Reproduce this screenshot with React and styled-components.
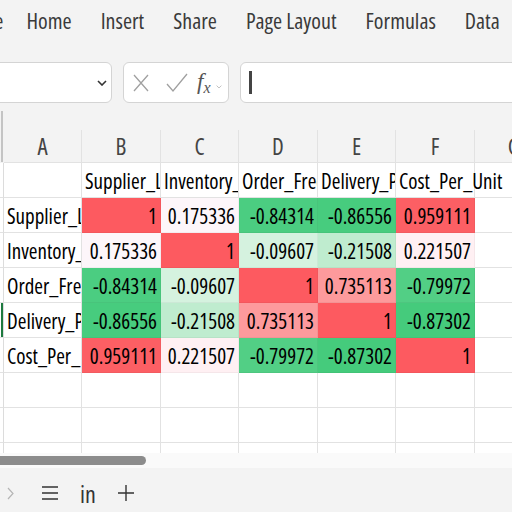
import React from 'react';
import styled, { createGlobalStyle } from 'styled-components';

const GlobalStyle = createGlobalStyle`
  html, body { margin: 0; padding: 0; }
  body {
    width: 512px;
    height: 512px;
    overflow: hidden;
    background: #f3f3f3;
    font-family: "Open Sans", "Liberation Sans", sans-serif;
    font-stretch: 75%;
  }
`;

const Page = styled.div`
  width: 512px;
  height: 512px;
  display: flex;
  flex-direction: column;
  overflow: hidden;
`;

const TabBar = styled.div`
  height: 40px;
  display: flex;
  align-items: center;
  gap: 29px;
  margin-left: -23px;
  white-space: nowrap;
`;

const Tab = styled.span`
  font-size: 22px;
  color: #3a3a3a;
  margin-right: ${(p) => (p.$first ? '-6px' : '0')};
`;

const FormulaRow = styled.div`
  display: flex;
  gap: 11px;
  padding: 22px 0 1px;
  height: 41px;
`;

const Box = styled.div`
  height: 41px;
  box-sizing: border-box;
  background: #fff;
  border: 1px solid #d4d4d4;
  border-radius: 6px;
  display: flex;
  align-items: center;
`;

const NameBox = styled(Box)`
  width: 120px;
  margin-left: -8px;
  justify-content: flex-end;
  padding-right: 4px;
`;

const FuncBox = styled(Box)`
  width: 106px;
  padding-left: 9px;
`;

const FormulaInput = styled(Box)`
  flex: 1;
  margin-right: -20px;
  padding-left: 8px;
`;

const Caret = styled.div`
  width: 3px;
  height: 23px;
  background: #444;
`;

const Fx = styled.span`
  font-family: "Liberation Serif", serif;
  font-style: italic;
  font-size: 23px;
  color: #555;
  margin-left: 8px;
  sub { font-size: 16px; vertical-align: -4px; }
`;

const Sheet = styled.div`
  height: 349px;
  overflow: hidden;
  background: #fff;
`;

const Grid = styled.div`
  display: grid;
  grid-template-columns: 4px 78px 79px 78px 79px 78px 79px 79px;
  grid-template-rows: 59px;
  grid-auto-rows: 35px;
  font-size: 21px;
  color: #000;
`;

const HeaderCell = styled.div`
  background: #f3f3f3;
  display: flex;
  align-items: flex-end;
`;

const Letter = styled.div`
  flex: 1;
  height: 33px;
  box-sizing: border-box;
  border-right: 1px solid #e2e2e2;
  border-bottom: 1px solid #e2e2e2;
  display: flex;
  align-items: center;
  justify-content: center;
  color: #444;
  font-size: 23px;
`;

const Corner = styled.div`
  background: #f3f3f3;
  display: flex;
  align-items: flex-end;
  padding-bottom: 1px;
  box-sizing: border-box;
  &::before {
    content: '';
    display: block;
    width: 2px;
    margin-left: 1px;
    height: 51px;
    background: #c4c4c4;
  }
`;

const RowHead = styled.div`
  box-sizing: border-box;
  border-right: 1px solid #dcdcdc;
  border-bottom: 1px solid #e2e2e2;
  background: ${(p) => (p.$active ? 'linear-gradient(to right, #fff 1px, #1e7a3f 1px)' : '#fff')};
`;

const Cell = styled.div`
  box-sizing: border-box;
  border-right: 1px solid ${(p) => (p.$bg ? 'rgba(0,0,0,0.04)' : '#e2e2e2')};
  border-bottom: 1px solid ${(p) => (p.$bg ? 'rgba(0,0,0,0.04)' : '#e2e2e2')};
  background: ${(p) => p.$bg || '#fff'};
  display: flex;
  align-items: flex-end;
  justify-content: ${(p) => (p.$num ? 'flex-end' : 'flex-start')};
  padding: 0 3px 2px;
  white-space: nowrap;
  overflow: ${(p) => (p.$spill ? 'visible' : 'hidden')};
  position: ${(p) => (p.$spill ? 'relative' : 'static')};
  z-index: ${(p) => (p.$spill ? 1 : 0)};
`;

const ScrollStrip = styled.div`
  height: 15px;
  background: #fafafa;
  display: flex;
  align-items: center;
`;

const Thumb = styled.div`
  width: 146px;
  height: 9px;
  background: #8c8c8c;
  border-radius: 0 5px 5px 0;
`;

const BottomBar = styled.div`
  height: 44px;
  box-sizing: border-box;
  padding: 6px 0 0 7px;
  background: #f3f3f3;
  display: flex;
  align-items: center;
`;

const BarItem = styled.div`
  width: ${(p) => p.$w || 38}px;
  display: flex;
  align-items: center;
  color: #333;
  font-size: 24px;
`;

const names = ['Supplier_Lead_Time', 'Inventory_Level', 'Order_Frequency', 'Delivery_Performance', 'Cost_Per_Unit'];

const matrix = [
  [1, 0.175336, -0.84314, -0.86556, 0.959111],
  [0.175336, 1, -0.09607, -0.21508, 0.221507],
  [-0.84314, -0.09607, 1, 0.735113, -0.79972],
  [-0.86556, -0.21508, 0.735113, 1, -0.87302],
  [0.959111, 0.221507, -0.79972, -0.87302, 1],
];

// colour scale picked per value (red = high, green = low)
const scale = {
  '1': '#fd5a60',
  '0.959111': '#fc5f64',
  '0.735113': '#fd9a9c',
  '0.221507': '#fff0f3',
  '0.175336': '#fdf6fa',
  '-0.09607': '#d5f2df',
  '-0.21508': '#bfeccf',
  '-0.79972': '#52cf85',
  '-0.84314': '#4bcd81',
  '-0.86556': '#47cc7e',
  '-0.87302': '#45cb7c',
};

const letters = ['A', 'B', 'C', 'D', 'E', 'F', 'G'];

const Chevron = ({ size = 10, color = '#333', w = 1.6 }) => (
  <svg width={size} height={size * 0.6} viewBox="0 0 10 6">
    <path d="M1 1 L5 5 L9 1" fill="none" stroke={color} strokeWidth={w} />
  </svg>
);

export default function App() {
  const rows = [];
  rows.push(
    <React.Fragment key="h">
      <RowHead />
      <Cell />
      {names.map((n, i) => (
        <Cell key={n} $spill={i === names.length - 1}>{n}</Cell>
      ))}
      <Cell />
    </React.Fragment>
  );
  matrix.forEach((r, ri) => {
    rows.push(
      <React.Fragment key={ri}>
        <RowHead $active={ri === 3} />
        <Cell>{names[ri]}</Cell>
        {r.map((v, ci) => (
          <Cell key={ci} $num $bg={scale[String(v)]}>{v}</Cell>
        ))}
        <Cell />
      </React.Fragment>
    );
  });
  for (let k = 0; k < 3; k++) {
    rows.push(
      <React.Fragment key={'e' + k}>
        <RowHead />
        {letters.map((l) => <Cell key={l} />)}
      </React.Fragment>
    );
  }

  return (
    <>
      <GlobalStyle />
      <Page>
        <TabBar>
          {['File', 'Home', 'Insert', 'Share', 'Page Layout', 'Formulas', 'Data', 'Review'].map((t, i) => (
            <Tab key={t} $first={i === 0}>{t}</Tab>
          ))}
        </TabBar>
        <FormulaRow>
          <NameBox>
            <Chevron size={10} color="#333" />
          </NameBox>
          <FuncBox>
            <svg width="16" height="18" viewBox="0 0 16 18">
              <path d="M1 1 L15 17 M15 1 L1 17" stroke="#a0a0a0" strokeWidth="1.3" fill="none" />
            </svg>
            <svg width="24" height="20" viewBox="0 0 24 20" style={{ marginLeft: 16 }}>
              <path d="M2 11 L8 18 L22 1" stroke="#a0a0a0" strokeWidth="1.3" fill="none" />
            </svg>
            <Fx>f<sub>x</sub></Fx>
            <span style={{ marginLeft: 5 }}>
              <Chevron size={6} color="#aaa" w={1.2} />
            </span>
          </FuncBox>
          <FormulaInput>
            <Caret />
          </FormulaInput>
        </FormulaRow>
        <Sheet>
          <Grid>
            <Corner />
            {letters.map((l) => (
              <HeaderCell key={l}>
                <Letter>{l}</Letter>
              </HeaderCell>
            ))}
            {rows}
          </Grid>
        </Sheet>
        <ScrollStrip>
          <Thumb />
        </ScrollStrip>
        <BottomBar>
          <BarItem $w={35}>
            <svg width="7" height="13" viewBox="0 0 7 13">
              <path d="M1 1 L6 6.5 L1 12" stroke="#b5b5b5" strokeWidth="1.2" fill="none" />
            </svg>
          </BarItem>
          <BarItem $w={38}>
            <svg width="16" height="16" viewBox="0 0 16 16">
              <path d="M0 2 H16 M0 8 H16 M0 14 H16" stroke="#333" strokeWidth="1.6" fill="none" />
            </svg>
          </BarItem>
          <BarItem $w={38}>in</BarItem>
          <BarItem>
            <svg width="16" height="16" viewBox="0 0 16 16">
              <path d="M8 0 V16 M0 8 H16" stroke="#333" strokeWidth="1.4" fill="none" />
            </svg>
          </BarItem>
        </BottomBar>
      </Page>
    </>
  );
}
